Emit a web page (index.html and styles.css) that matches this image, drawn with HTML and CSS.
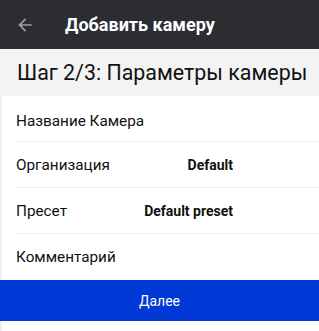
FILE: index.html
```html
<!DOCTYPE html>
<html lang="ru">

<head>
    <meta charset="UTF-8">
    <title>Добавить камеру</title>
    <link rel="stylesheet" href="styles.css">
</head>

<body>
    <div class="toolbar">
        <svg class="back" width="20" height="20" viewBox="0 0 24 24">
            <path d="M20 11H7.83l5.59-5.59L12 4l-8 8 8 8 1.41-1.41L7.83 13H20v-2z" fill="currentColor" />
        </svg>
        <div class="toolbar-title">Добавить камеру</div>
    </div>

    <div class="step">Шаг 2/3: Параметры камеры</div>

    <div class="form">
        <div class="row">
            <div class="label">Название Камера</div>
        </div>
        <div class="row">
            <div class="label">Организация</div>
            <div class="value">Default</div>
        </div>
        <div class="row">
            <div class="label">Пресет</div>
            <div class="value">Default preset</div>
        </div>
        <div class="row">
            <div class="label">Комментарий</div>
        </div>
    </div>

    <button class="next">Далее</button>
</body>

</html>
```

FILE: styles.css
```css
body {
    margin: 0;
    height: 331px;
    overflow: hidden;
    font-family: Roboto, "Noto Sans", sans-serif;
    background: #fff;
    box-shadow: inset 3px 0 3px -2px rgba(0, 0, 0, 0.12);
}

.toolbar {
    height: 49px;
    background: #2b2d33;
    display: flex;
    align-items: center;
    padding-left: 15px;
}

.back {
    color: #9c9ea5;
}

.toolbar-title {
    margin-left: 30px;
    color: #fff;
    font-size: 18px;
    font-weight: 700;
}

.step {
    height: 47px;
    background: #f3f3f3;
    display: flex;
    align-items: center;
    padding-left: 17px;
    font-size: 21.4px;
    color: #111;
}

.form {
    padding-left: 16px;
}

.row {
    height: 46px;
    box-sizing: border-box;
    display: flex;
    align-items: center;
    border-bottom: 1px solid #eeeeee;
    font-size: 15.3px;
    color: #111;
}

.row:first-child {
    padding-top: 4px;
}

.row:last-child {
    border-bottom: none;
}

.value {
    margin-left: auto;
    margin-right: 86px;
    white-space: nowrap;
    font-size: 14px;
    font-weight: 700;
}

.next {
    display: block;
    width: 100%;
    height: 41px;
    border: none;
    background: #0039d5;
    color: #fff;
    font-family: inherit;
    font-size: 14px;
}
```
